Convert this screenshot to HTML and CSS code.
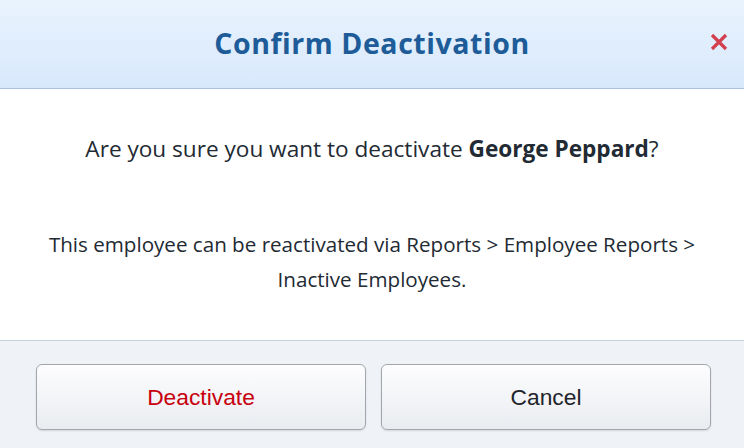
FILE: index.html
```html
<!DOCTYPE html>
<html>
<head>
<meta charset="utf-8">
<link rel="stylesheet" href="styles.css">
</head>
<body>
<div class="dialog">
  <header class="dlg-header">
    <h1 class="dlg-title">Confirm Deactivation</h1>
    <button class="dlg-close" aria-label="Close">
      <svg width="18" height="18" viewBox="0 0 18 18"><path d="M2 2 L16 16 M16 2 L2 16" stroke="#d2404f" stroke-width="3.2" stroke-linecap="butt"/></svg>
    </button>
  </header>
  <main class="dlg-body">
    <p class="question">Are you sure you want to deactivate <b>George Peppard</b>?</p>
    <p class="note">This employee can be reactivated via Reports &gt; Employee Reports &gt; Inactive Employees.</p>
  </main>
  <footer class="dlg-footer">
    <button class="btn btn-danger">Deactivate</button>
    <button class="btn">Cancel</button>
  </footer>
</div>
</body>
</html>
```
FILE: styles.css
```css
* { box-sizing: border-box; }
html, body { margin: 0; padding: 0; }
body {
  width: 744px;
  height: 448px;
  font-family: "Open Sans", "Noto Sans", sans-serif;
  background: #fff;
  overflow: hidden;
}
.dialog {
  display: flex;
  flex-direction: column;
  height: 448px;
}
.dlg-header {
  position: relative;
  height: 89px;
  flex: none;
  background: linear-gradient(#e9f3fe, #d8e8fb);
  border-bottom: 1px solid #a9c3df;
  display: flex;
  align-items: center;
  justify-content: center;
}
.dlg-title {
  margin: 0;
  font-size: 28.5px;
  font-weight: 700;
  color: #1d5c98;
  letter-spacing: 0.55px;
  padding-bottom: 2px;
}
.dlg-close {
  position: absolute;
  right: 16px;
  top: 33px;
  width: 18px;
  height: 18px;
  padding: 0;
  border: 0;
  background: none;
  display: block;
}
.dlg-close svg { display: block; }
.dlg-body {
  flex: 1;
  background: #fff;
  text-align: center;
  color: #222a33;
  padding: 0 40px;
}
.question {
  margin: 0;
  padding-top: 45px;
  font-size: 22.6px;
  line-height: 30px;
}
.question b { font-weight: 700; }
.note {
  margin: 0;
  padding-top: 63px;
  font-size: 20.6px;
  line-height: 35px;
}
.dlg-footer {
  flex: none;
  height: 108px;
  background: #eff2f7;
  border-top: 1px solid #c6cfdc;
  display: flex;
  gap: 15px;
  padding: 23px 33px 0 36px;
}
.btn {
  width: 330px;
  height: 66px;
  border: 1px solid #a3a7ad;
  border-radius: 6px;
  background: linear-gradient(#fdfdfe, #e9ecf0);
  box-shadow: 0 1px 2px rgba(0,0,0,0.12);
  font-family: "Liberation Sans", Arial, sans-serif;
  font-size: 22.8px;
  color: #1f242b;
  padding: 0;
}
.btn-danger { color: #c8000e; }
```
